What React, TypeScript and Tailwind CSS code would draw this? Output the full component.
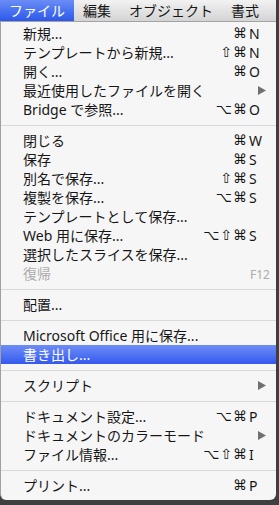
import React from "react";

type Item =
  | { sep: true }
  | {
      sep?: false;
      label: string;
      mods?: string;
      keyName?: string;
      submenu?: boolean;
      disabled?: boolean;
      active?: boolean;
    };

const menuItems: Item[] = [
  { label: "新規...", mods: "⌘", keyName: "N" },
  { label: "テンプレートから新規...", mods: "⇧⌘", keyName: "N" },
  { label: "開く...", mods: "⌘", keyName: "O" },
  { label: "最近使用したファイルを開く", submenu: true },
  { label: "Bridge で参照...", mods: "⌥⌘", keyName: "O" },
  { sep: true },
  { label: "閉じる", mods: "⌘", keyName: "W" },
  { label: "保存", mods: "⌘", keyName: "S" },
  { label: "別名で保存...", mods: "⇧⌘", keyName: "S" },
  { label: "複製を保存...", mods: "⌥⌘", keyName: "S" },
  { label: "テンプレートとして保存..." },
  { label: "Web 用に保存...", mods: "⌥⇧⌘", keyName: "S" },
  { label: "選択したスライスを保存..." },
  { label: "復帰", keyName: "F12", disabled: true },
  { sep: true },
  { label: "配置..." },
  { sep: true },
  { label: "Microsoft Office 用に保存..." },
  { label: "書き出し...", active: true },
  { sep: true },
  { label: "スクリプト", submenu: true },
  { sep: true },
  { label: "ドキュメント設定...", mods: "⌥⌘", keyName: "P" },
  { label: "ドキュメントのカラーモード", submenu: true },
  { label: "ファイル情報...", mods: "⌥⇧⌘", keyName: "I" },
  { sep: true },
  { label: "プリント...", mods: "⌘", keyName: "P" },
];

const menuBar = ["ファイル", "編集", "オブジェクト", "書式"];

export default function App() {
  return (
    <div className="w-[279px] h-[505px] bg-[#3f3f3f] overflow-hidden font-['Noto_Sans','Noto_Sans_CJK_JP',sans-serif] text-[14px] text-[#161616]">
      {/* Menu bar */}
      <div className="w-[276px] h-[22px] flex bg-gradient-to-b from-[#f2f2f2] to-[#d4d4d4] border-b border-[#a3a3a3]">
        {menuBar.map((name, i) => (
          <div
            key={name}
            className={
              i === 0
                ? "px-[9px] h-full flex items-center leading-none text-white bg-gradient-to-b from-[#6a8cf5] to-[#2c57ea]"
                : "px-[9px] h-full flex items-center leading-none text-[#161616]"
            }
          >
            {name}
          </div>
        ))}
      </div>

      {/* Dropdown */}
      <div className="w-[276px] bg-[#f6f6f6] border-l border-[#a0a0a0] rounded-b-[6px] pt-[2px] pb-[5px]">
        {menuItems.map((item, i) => {
          if (item.sep) {
            return (
              <div key={i} className="h-[12px] flex items-center">
                <div className="w-full h-px bg-[#d9d9d9]" />
              </div>
            );
          }
          const textColor = item.active
            ? "text-white"
            : item.disabled
            ? "text-[#acacac]"
            : "text-[#161616]";
          return (
            <div
              key={i}
              className={
                "h-[19px] flex items-center leading-[19px] " +
                textColor +
                (item.active
                  ? " bg-gradient-to-b from-[#6f8cf6] to-[#3558ef]"
                  : "")
              }
            >
              <div className="pl-[22px] flex-1 whitespace-nowrap">
                {item.label}
              </div>
              <div className="font-['DejaVu_Sans',sans-serif] text-[14px] tracking-[1px] text-right">
                {item.mods ?? ""}
              </div>
              <div className="w-[28px] pl-[1px] whitespace-nowrap">
                {item.submenu ? (
                  <svg
                    width="8"
                    height="9"
                    viewBox="0 0 8 9"
                    className="ml-[9px]"
                  >
                    <path d="M0 0 L8 4.5 L0 9 Z" fill="#707070" />
                  </svg>
                ) : item.keyName === "F12" ? (
                  <span className="text-[12px] pl-[1px]">F12</span>
                ) : (
                  item.keyName ?? ""
                )}
              </div>
            </div>
          );
        })}
      </div>
    </div>
  );
}
